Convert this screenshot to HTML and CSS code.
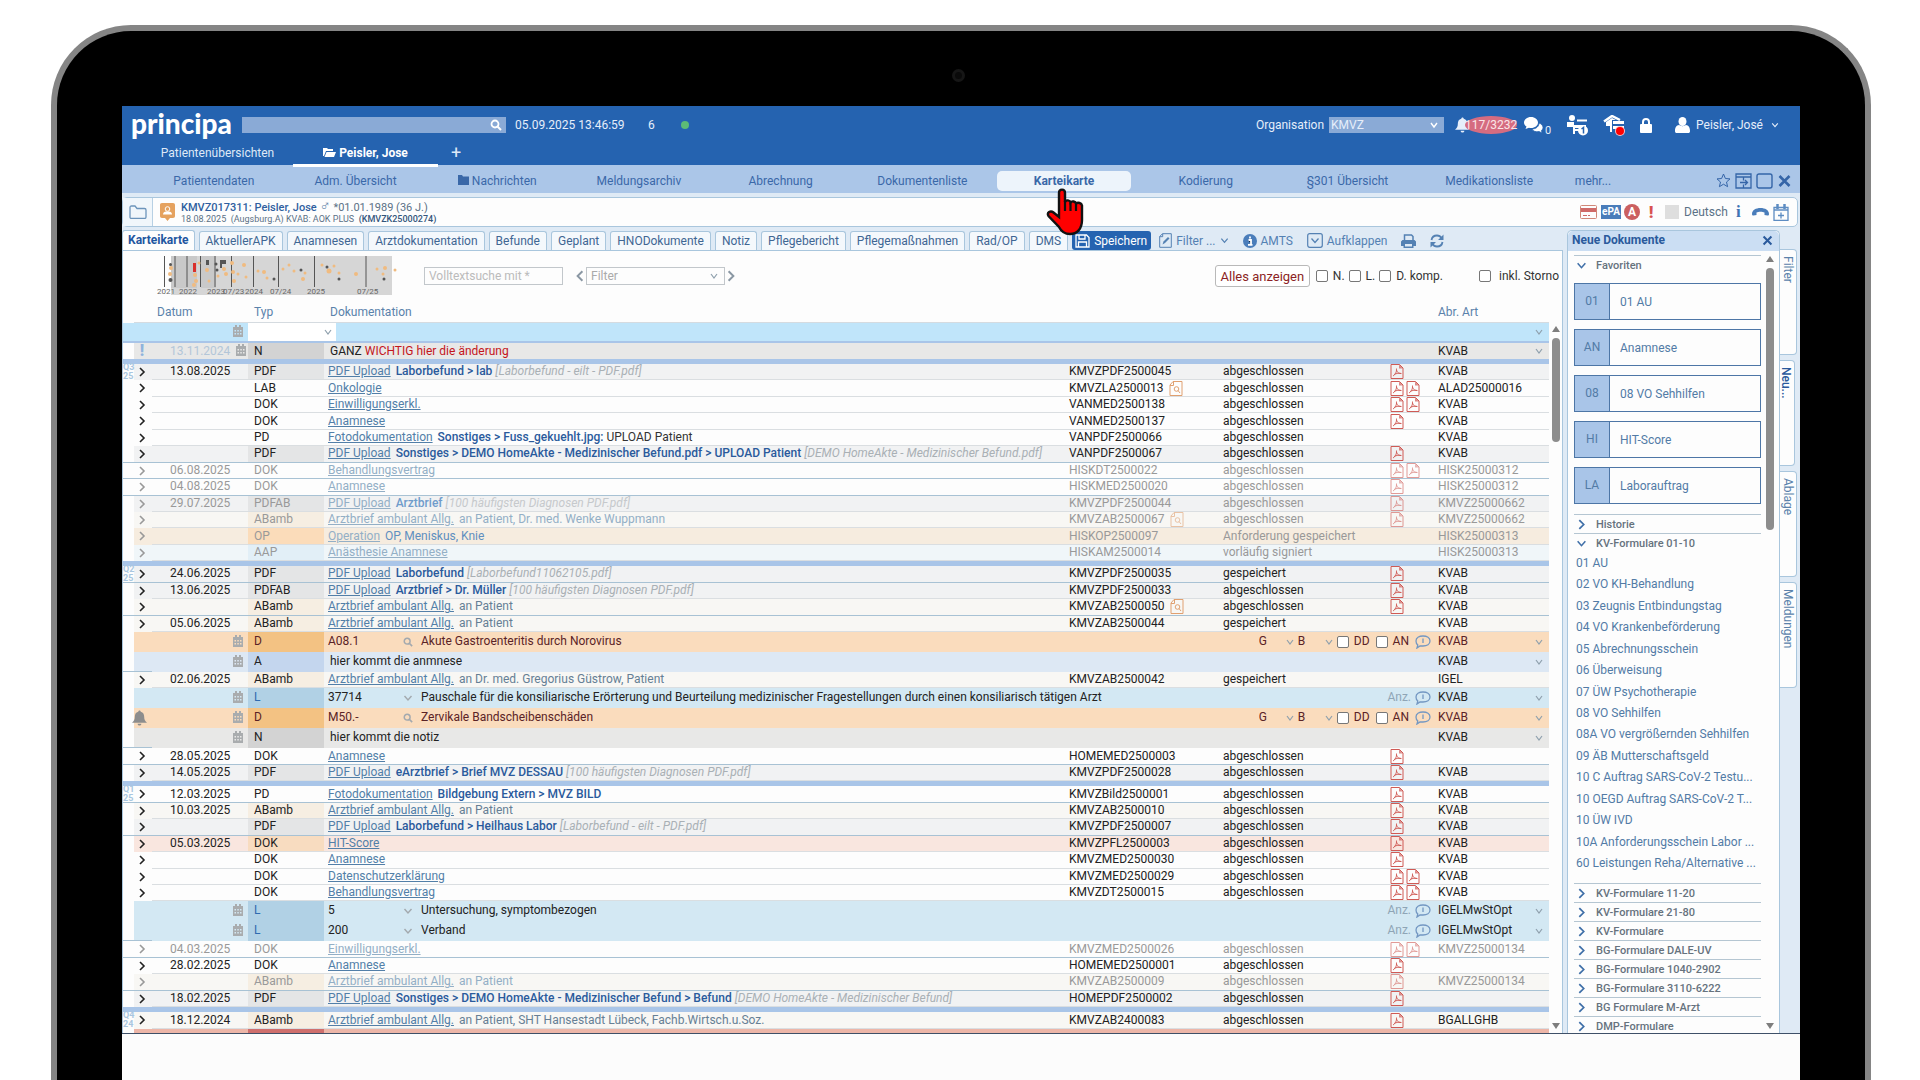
FILE: index.html
```html
<!DOCTYPE html>
<html lang="de">
<head>
  <meta charset="UTF-8">
  <title>principa - Karteikarte</title>
  <meta name="viewport" content="width=device-width, initial-scale=1.0">
  <link rel="stylesheet" href="styles.css">
</head>
<body>

<!-- Icons -->
<svg class="sprite" aria-hidden="true">
  <symbol id="i-search" viewBox="0 0 12 12"><circle cx="5" cy="5" r="3.5" fill="none" stroke="currentColor" stroke-width="1.8"/><path d="M7.5 7.5L11 11" stroke="currentColor" stroke-width="2"/></symbol>
  <symbol id="i-down" viewBox="0 0 10 10"><path d="M1.5 3l3.5 4 3.5-4" fill="none" stroke="currentColor" stroke-width="1.4"/></symbol>
  <symbol id="i-right" viewBox="0 0 10 10"><path d="M3 1l4 4-4 4" fill="none" stroke="currentColor" stroke-width="1.6"/></symbol>
  <symbol id="i-left" viewBox="0 0 10 10"><path d="M7 1L3 5l4 4" fill="none" stroke="currentColor" stroke-width="1.6"/></symbol>
  <symbol id="i-x" viewBox="0 0 14 14"><path d="M2 2l10 10M12 2L2 12" stroke="currentColor" stroke-width="2.6"/></symbol>
  <symbol id="i-cal" viewBox="0 0 12 12"><path fill="currentColor" fill-rule="evenodd" d="M1 2h2V0h2v2h2V0h2v2h2v10H1zM2.500 5v1.500H4V5zm2.800 0v1.500h1.500V5zM8 5v1.500h1.500V5zM2.500 8v1.500H4V8zm2.800 0v1.500h1.500V8zM8 8v1.500h1.500V8z"/></symbol>
  <symbol id="i-pdf" viewBox="0 0 14 15"><path d="M1 .5h8.500L13 4v10.500H1z" fill="none" stroke="currentColor"/><path d="M9 .5V4.500h4z" fill="currentColor" opacity=".7"/><path d="M3 12c2-1 4-4 3.500-7.500M6.500 6c.5 2.500 2.500 3.500 5 3.500M4 10.500c2-1 4-1.500 7-1" fill="none" stroke="currentColor" stroke-width=".9"/></symbol>
  <symbol id="i-preview" viewBox="0 0 14 15"><path d="M4 .5h9v14H1V4z" fill="none" stroke="currentColor"/><path d="M1 4.500h3.500V.5" fill="none" stroke="currentColor"/><circle cx="7.500" cy="8" r="2.300" fill="none" stroke="currentColor"/><path d="M9 9.500l2 2.500" stroke="currentColor"/></symbol>
  <symbol id="i-bubble" viewBox="0 0 16 14"><path d="M8 1c4 0 7 2 7 5s-3 5-7 5l-3 0-3 2 .8-3C1.500 9 1 7.500 1 6c0-3 3-5 7-5zM8 3.500V8" fill="none" stroke="currentColor" stroke-width="1.3"/></symbol>
  <symbol id="i-bell" viewBox="0 0 16 16"><path fill="currentColor" d="M8 0c.8 0 1.300.6 1.300 1.400C12 2 13 4.200 13 7c0 3 1 4.500 3 6H0c2-1.500 3-3 3-6 0-2.800 1-5 3.700-5.600C6.700.6 7.200 0 8 0zM6 14h4c0 1.200-.8 2-2 2s-2-.8-2-2z"/></symbol>
</svg>

<div class="laptop">
  <div class="camera"></div>

  <div class="screen">
    <header class="topbar">
      <div class="logo">principa</div>
      <div class="global-search">
        <input type="text" aria-label="Suche">
        <svg width="12" height="12"><use href="#i-search"/></svg>
      </div>
      <span class="clock">05.09.2025 13:46:59</span>
      <span class="count">6</span>
      <span class="online"></span>
      <div class="topbar-right">
        <label for="org">Organisation</label>
        <select id="org"><option>KMVZ</option></select>
        <svg class="bell" width="15" height="16"><use href="#i-bell"/></svg>
        <span class="badge">117/3232</span>
        <svg class="chat" width="19" height="16" viewBox="0 0 19 16"><path fill="#fff" d="M7 0c4 0 7 2.500 7 5.500S11 11 7 11c-1 0-1.500 0-2-.2L1.500 12l1-2.500C.8 8.500 0 7 0 5.500 0 2.500 3 0 7 0z"/><path fill="#fff" stroke="#2563b0" stroke-width=".8" d="M15 6c2.500.8 4 2.500 4 4.500 0 1.200-.6 2.200-1.500 3L18 16l-3-1.500c-3 .8-6-.2-7-2.500 4 0 7-2.500 7-6z"/></svg>
        <sub class="chat-count">0</sub>
        <svg class="org" width="22" height="21" viewBox="0 0 22 21"><circle cx="5" cy="3" r="3" fill="#fff"/><path fill="#fff" d="M0 7h7v3h12v3H8v6H6v-7H0z"/><path d="M10 5.500h10M8 15h6" stroke="#fff" stroke-width="2"/><circle cx="16" cy="15.500" r="5" fill="#fff"/><path d="M14.500 14l2-1.500v6" fill="none" stroke="#2563b0" stroke-width="1.500"/></svg>
        <svg class="org" width="22" height="21" viewBox="0 0 22 21"><path d="M1 6.500L9 1l8 4" fill="none" stroke="#fff" stroke-width="2.500"/><path fill="#fff" d="M3 7l6-4 4 2H9v12H7v-6H3zM10 6h11v3H10zM10 11h11v3H10z"/><circle cx="17" cy="16" r="5" fill="#f2c4cc"/><circle cx="17" cy="16" r="4" fill="#f00"/></svg>
        <svg class="lock" width="12" height="15" viewBox="0 0 12 15"><path d="M3 7V4a3 3 0 016 0v3" fill="none" stroke="#fff" stroke-width="2"/><rect y="6" width="12" height="9" rx="1" fill="#fff"/></svg>
        <svg class="user" width="15" height="16" viewBox="0 0 15 16"><ellipse cx="7.500" cy="4.500" rx="4" ry="4.500" fill="#fff"/><path fill="#fff" d="M4 8c2 1.500 5 1.500 7 0 2.500.5 4 2 4 6 0 1.500-.5 2-2 2H2c-1.500 0-2-.5-2-2 0-4 1.500-5.500 4-6z"/></svg>
        <span class="username">Peisler, José</span>
        <svg width="8" height="8"><use href="#i-down"/></svg>
      </div>
    </header>

    <nav class="tabs">
      <a href="#">Patientenübersichten</a>
      <a href="#" class="open"><svg width="13" height="10" viewBox="0 0 13 10"><path fill="currentColor" d="M0 1h4l1 1h5v2H3L1 9H0zM3.500 5H13l-2 5H1.500z"/></svg> Peisler, Jose</a>
      <button type="button" class="add">+</button>
    </nav>

    <nav class="subnav">
      <a href="#">Patientendaten</a>
      <a href="#">Adm. Übersicht</a>
      <a href="#"><svg width="11" height="10" viewBox="0 0 11 10"><path fill="currentColor" d="M0 0h4l1 1.500h6V10H0z"/></svg> Nachrichten</a>
      <a href="#">Meldungsarchiv</a>
      <a href="#">Abrechnung</a>
      <a href="#">Dokumentenliste</a>
      <a href="#" class="active">Karteikarte</a>
      <a href="#">Kodierung</a>
      <a href="#">§301 Übersicht</a>
      <a href="#">Medikationsliste</a>
      <a href="#" class="more">mehr...</a>
      <div class="win-icons">
        <svg width="15" height="15" viewBox="0 0 15 15"><path d="M7.500 1l1.900 4.500 4.600.4-3.500 3.100 1.100 4.700-4.100-2.500-4.100 2.500L4.500 9 1 5.900l4.600-.4z" fill="none" stroke="currentColor"/></svg>
        <svg width="17" height="16" viewBox="0 0 17 16"><path d="M1 1h15v14H1zM1 4h15M5 9.500h7M10 7l2.500 2.500L10 12M8.500 4v3.500M8.500 11.500V15" fill="none" stroke="currentColor" stroke-width="1.300"/></svg>
        <svg width="17" height="16" viewBox="0 0 17 16"><rect x="1" y="1" width="15" height="14" rx="2" fill="none" stroke="currentColor" stroke-width="1.400"/></svg>
        <svg width="15" height="14"><use href="#i-x"/></svg>
      </div>
    </nav>

    <div class="workspace">
      <section class="patient">
        <div class="folder"><svg width="18" height="14" viewBox="0 0 18 14"><path d="M1 12V2.500C1 1.500 1.500 1 2.500 1H6l2 2.500h7.500c1 0 1.500.5 1.500 1.500v7c0 1-.5 1.500-1.500 1.500h-13C1.500 13.500 1 13 1 12z" fill="none" stroke="currentColor" stroke-width="1.300"/></svg></div>
        <svg class="avatar" width="15" height="18" viewBox="0 0 15 18"><path fill="#e5a25f" d="M2 0h11c1.300 0 2 .7 2 2v11c0 1.300-.7 2-2 2h-3l-2.500 3L5 15H2c-1.300 0-2-.7-2-2V2C0 .7.7 0 2 0z"/><circle cx="7.500" cy="6" r="2.300" fill="none" stroke="#fff"/><path d="M3 11.500c0-2 1.500-3 3-3h3c1.500 0 3 1 3 3z" fill="#fff"/></svg>
        <div class="who">
          <div><b>KMVZ017311: Peisler, Jose</b> <span class="sex">♂</span> *01.01.1989 (36 J.)</div>
          <div class="case">18.08.2025 &nbsp;(Augsburg.A) KVAB: AOK PLUS <b>&nbsp;(KMVZK25000274)</b></div>
        </div>
        <div class="flags">
          <svg width="17" height="14" viewBox="0 0 17 14"><rect x=".5" y=".5" width="16" height="13" rx="1" fill="none" stroke="#d08878"/><path fill="#cf6a68" d="M1 3h15v4H1z"/><path d="M3 10.500h4M8 10.500h2" stroke="#cf6a68"/></svg>
          <span class="epa">ePA</span>
          <span class="allergy">A</span>
          <span class="alert">!</span>
          <span class="lang-flag"></span>
          <span class="lang">Deutsch</span>
          <span class="info">i</span>
          <svg width="17" height="8" viewBox="0 0 17 8"><path fill="#4a7dba" d="M0 6c0-4 4-6 8.500-6S17 2 17 6c0 1-.5 1.500-1.500 1.500L12.500 7V4.500c-2-1-6-1-8 0V7l-3 .5C.5 7.500 0 7 0 6z"/></svg>
          <svg width="16" height="17" viewBox="0 0 16 17"><path d="M1 3.500h14v13H1zM1 6h14M8 8.500v6M5 11.500h6" fill="none" stroke="#5d8cc2" stroke-width="1.300"/><path d="M4.500 0v5M11.500 0v5" stroke="#5d8cc2" stroke-width="2.500"/></svg>
        </div>
      </section>

      <div class="columns">
        <main class="chart">
          <nav class="chart-tabs">
            <a href="#" class="active">Karteikarte</a>
            <a href="#">AktuellerAPK</a>
            <a href="#">Anamnesen</a>
            <a href="#">Arztdokumentation</a>
            <a href="#">Befunde</a>
            <a href="#">Geplant</a>
            <a href="#">HNODokumente</a>
            <a href="#">Notiz</a>
            <a href="#">Pflegebericht</a>
            <a href="#">Pflegemaßnahmen</a>
            <a href="#">Rad/OP</a>
            <a href="#">DMS</a>
            <button type="button" class="save"><svg width="15" height="14" viewBox="0 0 15 14"><path d="M1 1h10.500L14 3.500V13H1zM3.500 13V8h8v5M4 1v4h6V1" fill="none" stroke="currentColor" stroke-width="1.300"/></svg>Speichern</button>
            <button type="button" class="tool"><svg width="13" height="15" viewBox="0 0 13 15"><path d="M3.500.7h8.800v13.600H.7V3.500zM.7 3.700h3v-3" fill="none" stroke="currentColor"/><path d="M3.500 11.500l1-3L9 4l1.500 1.500L6 10z" fill="currentColor"/></svg>Filter ... <svg width="9" height="9"><use href="#i-down"/></svg></button>
            <button type="button" class="tool"><svg width="14" height="14" viewBox="0 0 14 14"><circle cx="7" cy="7" r="7" fill="#4a7dba"/><path d="M5.500 6H8v4.500M5 10.800h4.500M7 2.500v2" stroke="#fff" stroke-width="1.800"/></svg>AMTS</button>
            <button type="button" class="tool"><svg width="16" height="15" viewBox="0 0 16 15"><rect x=".7" y=".7" width="14.600" height="13.600" rx="2" fill="none" stroke="currentColor" stroke-width="1.200"/><path d="M4.500 5.500L8 9.500l3.500-4" fill="none" stroke="currentColor" stroke-width="1.300"/></svg>Aufklappen</button>
            <button type="button" class="tool" aria-label="Drucken"><svg width="15" height="14" viewBox="0 0 15 14"><path d="M3.500 6V1h7L12 2.500V6" fill="none" stroke="currentColor" stroke-width="1.500"/><path fill="currentColor" fill-rule="evenodd" d="M1.500 6h12L15 7.500V12h-2.500v2h-10v-2H0V7.500zM4 10v2.500h7V10z"/></svg></button>
            <button type="button" class="tool" aria-label="Aktualisieren"><svg width="14" height="14" viewBox="0 0 14 14"><path d="M1.500 6C2 3 4.500 1.500 7 1.500c2 0 3.500.8 4.500 2.500M12.500 8c-.5 3-3 4.500-5.500 4.500-2 0-3.500-.8-4.500-2.500" fill="none" stroke="currentColor" stroke-width="1.800"/><path fill="currentColor" d="M13.500.5V6H8zM.5 13.500V8H6z"/></svg></button>
          </nav>

          <div class="sheet">
            <div class="filters">
              <svg class="timeline" width="250" height="44" viewBox="0 0 250 44">
                <rect x="21" y="2" width="221" height="39" fill="#d6d6d6"/>
                <path fill="#c9c9c9" d="M21 2h26v32H21zM51 2h15v32H51z"/>
                <path d="M14.500 2v31M25 2v31M37 2v31M50.500 2v31M65 2v31M81.500 2v31M103.500 2v31M128.500 2v31M164.500 2v31M216 2v31" stroke="#555"/>
                <g fill="#f0bb80"><circle cx="21" cy="14" r="2"/><circle cx="20" cy="20" r="2"/><circle cx="45" cy="21" r="2"/><circle cx="46" cy="27" r="2"/><circle cx="49" cy="9" r="1.500"/><circle cx="44" cy="31" r="2"/><circle cx="57" cy="16" r="2"/><circle cx="59" cy="27" r="1.500"/><circle cx="68" cy="22" r="1.500"/><circle cx="74" cy="15" r="2"/><circle cx="76" cy="20" r="2"/><circle cx="82" cy="9" r="2"/><circle cx="83" cy="18" r="2"/><circle cx="84" cy="27" r="2"/><circle cx="88" cy="20" r="1.500"/><circle cx="94" cy="11" r="2"/><circle cx="96" cy="23" r="1.500"/><circle cx="108" cy="17" r="1.500"/><circle cx="114" cy="18" r="2"/><circle cx="117" cy="24" r="1.500"/><circle cx="133" cy="15" r="1.500"/><circle cx="139" cy="11" r="1.500"/><circle cx="144" cy="17" r="1.500"/><circle cx="153" cy="25" r="2"/><circle cx="155" cy="19" r="1.500"/><circle cx="172" cy="11" r="1.500"/><circle cx="179" cy="17" r="2.500"/><circle cx="184" cy="12" r="1.500"/><circle cx="189" cy="19" r="1.500"/><circle cx="206" cy="20" r="2"/><circle cx="227" cy="15" r="1.500"/><circle cx="233" cy="20" r="1.500"/><circle cx="235" cy="14" r="2"/><circle cx="245" cy="16" r="1.500"/></g>
                <g fill="#555"><circle cx="20.500" cy="10.500" r="1.500"/><circle cx="20.500" cy="26" r="2"/><circle cx="66" cy="10" r="1.500"/><circle cx="67" cy="16" r="1.500"/><path d="M56 6h3v5h-3zM70 6h6v4h-4v4h-2z"/><circle cx="124" cy="25" r="1.500"/><circle cx="151" cy="16" r="1.500"/><circle cx="177" cy="13" r="1.500"/><circle cx="189" cy="25" r="1.500"/><circle cx="234" cy="25" r="1.500"/></g>
                <path fill="#d9302c" d="M43 9h3v9h-3z"/>
                <g class="years"><text x="7" y="40">2021</text><text x="29" y="40">2022</text><text x="57" y="40">2023</text><text x="73" y="40">07/23</text><text x="95" y="40">2024</text><text x="120" y="40">07/24</text><text x="157" y="40">2025</text><text x="207" y="40">07/25</text></g>
              </svg>
              <input type="text" class="fulltext" placeholder="Volltextsuche mit *" aria-label="Volltextsuche">
              <svg class="prev" width="12" height="12"><use href="#i-left"/></svg>
              <select class="filter" aria-label="Filter"><option>Filter</option></select>
              <svg width="12" height="12"><use href="#i-right"/></svg>
              <div class="switches">
                <button type="button" class="show-all">Alles anzeigen</button>
                <label><input type="checkbox">N.</label>
                <label><input type="checkbox">L.</label>
                <label><input type="checkbox">D. komp.</label>
                <label class="storno"><input type="checkbox">inkl. Storno</label>
              </div>
            </div>

            <div class="list">
              <table>
                <colgroup><col class="c-q"><col class="c-chev"><col class="c-date"><col class="c-type"><col><col class="c-nr"><col class="c-status"><col class="c-files"><col class="c-abr"></colgroup>
                <thead>
                  <tr><th></th><th class="l"></th><th class="l d">Datum</th><th class="l t">Typ</th><th class="l doc">Dokumentation</th><th class="l"></th><th class="l"></th><th class="l"></th><th class="l">Abr. Art</th></tr>
                </thead>
                <tbody>
                  <tr class="new"><td></td><td></td><td class="cal"><svg><use href="#i-cal"/></svg></td><td colspan="2"><select class="type" aria-label="Typ"><option></option></select></td><td></td><td></td><td></td><td><select class="abr" aria-label="Abr. Art"><option></option></select></td></tr>
                  <tr class="edit pin note"><td></td><td class="mark">!</td><td class="cal"><span>13.11.2024</span><svg><use href="#i-cal"/></svg></td><td>N</td><td colspan="4" class="free">GANZ <em>WICHTIG hier die änderung</em></td><td><select class="abr" aria-label="Abr. Art"><option>KVAB</option></select></td></tr>
                  <tr class="bar"><td colspan="9"></td></tr>

                  <tr class="pdf"><td class="q"><span>Q3<br>25</span></td><td><svg><use href="#i-right"/></svg></td><td>13.08.2025</td><td>PDF</td><td><a href="#">PDF Upload</a> <b>Laborbefund &gt; lab</b> <i>[Laborbefund - eilt - PDF.pdf]</i></td><td>KMVZPDF2500045</td><td>abgeschlossen</td><td class="f"><svg><use href="#i-pdf"/></svg></td><td>KVAB</td></tr>
                  <tr><td></td><td><svg><use href="#i-right"/></svg></td><td></td><td>LAB</td><td><a href="#">Onkologie</a></td><td>KMVZLA2500013 <svg class="pv"><use href="#i-preview"/></svg></td><td>abgeschlossen</td><td class="f"><svg><use href="#i-pdf"/></svg><svg><use href="#i-pdf"/></svg></td><td>ALAD25000016</td></tr>
                  <tr><td></td><td><svg><use href="#i-right"/></svg></td><td></td><td>DOK</td><td><a href="#">Einwilligungserkl.</a></td><td>VANMED2500138</td><td>abgeschlossen</td><td class="f"><svg><use href="#i-pdf"/></svg><svg><use href="#i-pdf"/></svg></td><td>KVAB</td></tr>
                  <tr><td></td><td><svg><use href="#i-right"/></svg></td><td></td><td>DOK</td><td><a href="#">Anamnese</a></td><td>VANMED2500137</td><td>abgeschlossen</td><td class="f"><svg><use href="#i-pdf"/></svg></td><td>KVAB</td></tr>
                  <tr><td></td><td><svg><use href="#i-right"/></svg></td><td></td><td>PD</td><td><a href="#">Fotodokumentation</a> <b>Sonstiges &gt; Fuss_gekuehlt.jpg:</b> <span class="dark">UPLOAD Patient</span></td><td>VANPDF2500066</td><td>abgeschlossen</td><td></td><td>KVAB</td></tr>
                  <tr class="pdf last"><td></td><td><svg><use href="#i-right"/></svg></td><td></td><td>PDF</td><td><a href="#">PDF Upload</a> <b>Sonstiges &gt; DEMO HomeAkte - Medizinischer Befund.pdf &gt; UPLOAD Patient</b> <i>[DEMO HomeAkte - Medizinischer Befund.pdf]</i></td><td>VANPDF2500067</td><td>abgeschlossen</td><td class="f"><svg><use href="#i-pdf"/></svg></td><td>KVAB</td></tr>
                  <tr class="dim last"><td></td><td><svg><use href="#i-right"/></svg></td><td>06.08.2025</td><td>DOK</td><td><a href="#">Behandlungsvertrag</a></td><td>HISKDT2500022</td><td>abgeschlossen</td><td class="f"><svg><use href="#i-pdf"/></svg><svg><use href="#i-pdf"/></svg></td><td>HISK25000312</td></tr>
                  <tr class="dim last"><td></td><td><svg><use href="#i-right"/></svg></td><td>04.08.2025</td><td>DOK</td><td><a href="#">Anamnese</a></td><td>HISKMED2500020</td><td>abgeschlossen</td><td class="f"><svg><use href="#i-pdf"/></svg></td><td>HISK25000312</td></tr>
                  <tr class="dim pdf"><td></td><td><svg><use href="#i-right"/></svg></td><td>29.07.2025</td><td>PDFAB</td><td><a href="#">PDF Upload</a> <b>Arztbrief</b> <i>[100 häufigsten Diagnosen PDF.pdf]</i></td><td>KMVZPDF2500044</td><td>abgeschlossen</td><td class="f"><svg><use href="#i-pdf"/></svg></td><td>KMVZ25000662</td></tr>
                  <tr class="dim ab"><td></td><td><svg><use href="#i-right"/></svg></td><td></td><td>ABamb</td><td><a href="#">Arztbrief ambulant Allg.</a> an Patient, Dr. med. Wenke Wuppmann</td><td>KMVZAB2500067 <svg class="pv"><use href="#i-preview"/></svg></td><td>abgeschlossen</td><td class="f"><svg><use href="#i-pdf"/></svg></td><td>KMVZ25000662</td></tr>
                  <tr class="dim op"><td></td><td><svg><use href="#i-right"/></svg></td><td></td><td>OP</td><td><a href="#">Operation</a> <span class="blue">OP, Meniskus, Knie</span></td><td>HISKOP2500097</td><td>Anforderung gespeichert</td><td></td><td>HISK25000313</td></tr>
                  <tr class="dim aap"><td></td><td><svg><use href="#i-right"/></svg></td><td></td><td>AAP</td><td><a href="#">Anästhesie Anamnese</a></td><td>HISKAM2500014</td><td>vorläufig signiert</td><td></td><td>HISK25000313</td></tr>
                  <tr class="bar"><td colspan="9"></td></tr>

                  <tr class="pdf last"><td class="q"><span>Q2<br>25</span></td><td><svg><use href="#i-right"/></svg></td><td>24.06.2025</td><td>PDF</td><td><a href="#">PDF Upload</a> <b>Laborbefund</b> <i>[Laborbefund11062105.pdf]</i></td><td>KMVZPDF2500035</td><td>gespeichert</td><td class="f"><svg><use href="#i-pdf"/></svg></td><td>KVAB</td></tr>
                  <tr class="pdf"><td></td><td><svg><use href="#i-right"/></svg></td><td>13.06.2025</td><td>PDFAB</td><td><a href="#">PDF Upload</a> <b>Arztbrief &gt; Dr. Müller</b> <i>[100 häufigsten Diagnosen PDF.pdf]</i></td><td>KMVZPDF2500033</td><td>abgeschlossen</td><td class="f"><svg><use href="#i-pdf"/></svg></td><td>KVAB</td></tr>
                  <tr class="ab last"><td></td><td><svg><use href="#i-right"/></svg></td><td></td><td>ABamb</td><td><a href="#">Arztbrief ambulant Allg.</a> an Patient</td><td>KMVZAB2500050 <svg class="pv"><use href="#i-preview"/></svg></td><td>abgeschlossen</td><td class="f"><svg><use href="#i-pdf"/></svg></td><td>KVAB</td></tr>
                  <tr class="ab"><td></td><td><svg><use href="#i-right"/></svg></td><td>05.06.2025</td><td>ABamb</td><td><a href="#">Arztbrief ambulant Allg.</a> an Patient</td><td>KMVZAB2500044</td><td>gespeichert</td><td></td><td>KVAB</td></tr>
                  <tr class="edit diag"><td></td><td></td><td class="cal"><svg><use href="#i-cal"/></svg></td><td>D</td><td colspan="4"><div class="entry"><span class="code">A08.1</span><svg><use href="#i-search"/></svg><span class="desc">Akute Gastroenteritis durch Norovirus</span><select class="mini" aria-label="Sicherheit"><option>G</option></select><select class="mini" aria-label="Seite"><option>B</option></select><label><input type="checkbox">DD</label><label><input type="checkbox">AN</label><svg class="bub"><use href="#i-bubble"/></svg></div></td><td><select class="abr" aria-label="Abr. Art"><option>KVAB</option></select></td></tr>
                  <tr class="edit anam last"><td></td><td></td><td class="cal"><svg><use href="#i-cal"/></svg></td><td>A</td><td colspan="4" class="free">hier kommt die anmnese</td><td><select class="abr" aria-label="Abr. Art"><option>KVAB</option></select></td></tr>
                  <tr class="ab"><td></td><td><svg><use href="#i-right"/></svg></td><td>02.06.2025</td><td>ABamb</td><td><a href="#">Arztbrief ambulant Allg.</a> an Dr. med. Gregorius Güstrow, Patient</td><td>KMVZAB2500042</td><td>gespeichert</td><td></td><td>IGEL</td></tr>
                  <tr class="edit perf"><td></td><td></td><td class="cal"><svg><use href="#i-cal"/></svg></td><td>L</td><td colspan="4"><div class="entry"><span class="code">37714</span><svg><use href="#i-down"/></svg><span class="desc">Pauschale für die konsiliarische Erörterung und Beurteilung medizinischer Fragestellungen durch einen konsiliarisch tätigen Arzt</span><span class="anz">Anz.</span><svg class="bub"><use href="#i-bubble"/></svg></div></td><td><select class="abr" aria-label="Abr. Art"><option>KVAB</option></select></td></tr>
                  <tr class="edit diag"><td></td><td class="remind"><svg><use href="#i-bell"/></svg></td><td class="cal"><svg><use href="#i-cal"/></svg></td><td>D</td><td colspan="4"><div class="entry"><span class="code">M50.-</span><svg><use href="#i-search"/></svg><span class="desc">Zervikale Bandscheibenschäden</span><select class="mini" aria-label="Sicherheit"><option>G</option></select><select class="mini" aria-label="Seite"><option>B</option></select><label><input type="checkbox">DD</label><label><input type="checkbox">AN</label><svg class="bub"><use href="#i-bubble"/></svg></div></td><td><select class="abr" aria-label="Abr. Art"><option>KVAB</option></select></td></tr>
                  <tr class="edit note last"><td></td><td></td><td class="cal"><svg><use href="#i-cal"/></svg></td><td>N</td><td colspan="4" class="free">hier kommt die notiz</td><td><select class="abr" aria-label="Abr. Art"><option>KVAB</option></select></td></tr>
                  <tr class="last"><td></td><td><svg><use href="#i-right"/></svg></td><td>28.05.2025</td><td>DOK</td><td><a href="#">Anamnese</a></td><td>HOMEMED2500003</td><td>abgeschlossen</td><td class="f"><svg><use href="#i-pdf"/></svg></td><td></td></tr>
                  <tr class="pdf"><td></td><td><svg><use href="#i-right"/></svg></td><td>14.05.2025</td><td>PDF</td><td><a href="#">PDF Upload</a> <b>eArztbrief &gt; Brief MVZ DESSAU</b> <i>[100 häufigsten Diagnosen PDF.pdf]</i></td><td>KMVZPDF2500028</td><td>abgeschlossen</td><td class="f"><svg><use href="#i-pdf"/></svg></td><td>KVAB</td></tr>
                  <tr class="bar"><td colspan="9"></td></tr>

                  <tr class="last"><td class="q"><span>Q1<br>25</span></td><td><svg><use href="#i-right"/></svg></td><td>12.03.2025</td><td>PD</td><td><a href="#">Fotodokumentation</a> <b>Bildgebung Extern &gt; MVZ BILD</b></td><td>KMVZBild2500001</td><td>abgeschlossen</td><td class="f"><svg><use href="#i-pdf"/></svg></td><td>KVAB</td></tr>
                  <tr class="ab"><td></td><td><svg><use href="#i-right"/></svg></td><td>10.03.2025</td><td>ABamb</td><td><a href="#">Arztbrief ambulant Allg.</a> an Patient</td><td>KMVZAB2500010</td><td>abgeschlossen</td><td class="f"><svg><use href="#i-pdf"/></svg></td><td>KVAB</td></tr>
                  <tr class="pdf last"><td></td><td><svg><use href="#i-right"/></svg></td><td></td><td>PDF</td><td><a href="#">PDF Upload</a> <b>Laborbefund &gt; Heilhaus Labor</b> <i>[Laborbefund - eilt - PDF.pdf]</i></td><td>KMVZPDF2500007</td><td>abgeschlossen</td><td class="f"><svg><use href="#i-pdf"/></svg></td><td>KVAB</td></tr>
                  <tr class="score"><td></td><td><svg><use href="#i-right"/></svg></td><td>05.03.2025</td><td>DOK</td><td><a href="#">HIT-Score</a></td><td>KMVZPFL2500003</td><td>abgeschlossen</td><td class="f"><svg><use href="#i-pdf"/></svg></td><td>KVAB</td></tr>
                  <tr><td></td><td><svg><use href="#i-right"/></svg></td><td></td><td>DOK</td><td><a href="#">Anamnese</a></td><td>KMVZMED2500030</td><td>abgeschlossen</td><td class="f"><svg><use href="#i-pdf"/></svg></td><td>KVAB</td></tr>
                  <tr><td></td><td><svg><use href="#i-right"/></svg></td><td></td><td>DOK</td><td><a href="#">Datenschutzerklärung</a></td><td>KMVZMED2500029</td><td>abgeschlossen</td><td class="f"><svg><use href="#i-pdf"/></svg><svg><use href="#i-pdf"/></svg></td><td>KVAB</td></tr>
                  <tr><td></td><td><svg><use href="#i-right"/></svg></td><td></td><td>DOK</td><td><a href="#">Behandlungsvertrag</a></td><td>KMVZDT2500015</td><td>abgeschlossen</td><td class="f"><svg><use href="#i-pdf"/></svg><svg><use href="#i-pdf"/></svg></td><td>KVAB</td></tr>
                  <tr class="edit perf"><td></td><td></td><td class="cal"><svg><use href="#i-cal"/></svg></td><td>L</td><td colspan="4"><div class="entry"><span class="code">5</span><svg><use href="#i-down"/></svg><span class="desc">Untersuchung, symptombezogen</span><span class="anz">Anz.</span><svg class="bub"><use href="#i-bubble"/></svg></div></td><td><select class="abr" aria-label="Abr. Art"><option>IGELMwStOpt</option></select></td></tr>
                  <tr class="edit perf last"><td></td><td></td><td class="cal"><svg><use href="#i-cal"/></svg></td><td>L</td><td colspan="4"><div class="entry"><span class="code">200</span><svg><use href="#i-down"/></svg><span class="desc">Verband</span><span class="anz">Anz.</span><svg class="bub"><use href="#i-bubble"/></svg></div></td><td><select class="abr" aria-label="Abr. Art"><option>IGELMwStOpt</option></select></td></tr>
                  <tr class="dim last"><td></td><td><svg><use href="#i-right"/></svg></td><td>04.03.2025</td><td>DOK</td><td><a href="#">Einwilligungserkl.</a></td><td>KMVZMED2500026</td><td>abgeschlossen</td><td class="f"><svg><use href="#i-pdf"/></svg><svg><use href="#i-pdf"/></svg></td><td>KMVZ25000134</td></tr>
                  <tr><td></td><td><svg><use href="#i-right"/></svg></td><td>28.02.2025</td><td>DOK</td><td><a href="#">Anamnese</a></td><td>HOMEMED2500001</td><td>abgeschlossen</td><td class="f"><svg><use href="#i-pdf"/></svg></td><td></td></tr>
                  <tr class="dim ab last"><td></td><td><svg><use href="#i-right"/></svg></td><td></td><td>ABamb</td><td><a href="#">Arztbrief ambulant Allg.</a> an Patient</td><td>KMVZAB2500009</td><td>abgeschlossen</td><td class="f"><svg><use href="#i-pdf"/></svg></td><td>KMVZ25000134</td></tr>
                  <tr class="pdf"><td></td><td><svg><use href="#i-right"/></svg></td><td>18.02.2025</td><td>PDF</td><td><a href="#">PDF Upload</a> <b>Sonstiges &gt; DEMO HomeAkte - Medizinischer Befund &gt; Befund</b> <i>[DEMO HomeAkte - Medizinischer Befund]</i></td><td>HOMEPDF2500002</td><td>abgeschlossen</td><td class="f"><svg><use href="#i-pdf"/></svg></td><td></td></tr>
                  <tr class="bar"><td colspan="9"></td></tr>

                  <tr class="ab"><td class="q"><span>Q4<br>24</span></td><td><svg><use href="#i-right"/></svg></td><td>18.12.2024</td><td>ABamb</td><td><a href="#">Arztbrief ambulant Allg.</a> an Patient, SHT Hansestadt Lübeck, Fachb.Wirtsch.u.Soz.</td><td>KMVZAB2400083</td><td>abgeschlossen</td><td class="f"><svg><use href="#i-pdf"/></svg></td><td>BGALLGHB</td></tr>
                  <tr class="cut"><td></td><td></td><td></td><td></td><td></td><td></td><td></td><td></td><td></td></tr>
                </tbody>
              </table>
              <div class="scroll list-scroll"><span class="up"></span><span class="thumb"></span><span class="down"></span></div>
            </div>
          </div>
        </main>

        <aside class="panel">
          <h2>Neue Dokumente <button type="button" aria-label="Schließen"><svg width="11" height="11" viewBox="0 0 14 14"><use href="#i-x"/></svg></button></h2>
          <div class="panel-body">
            <div class="groups">
              <h3><svg><use href="#i-down"/></svg>Favoriten</h3>
              <div class="cards">
                <a href="#"><span>01</span>01 AU</a>
                <a href="#"><span>AN</span>Anamnese</a>
                <a href="#"><span>08</span>08 VO Sehhilfen</a>
                <a href="#"><span>HI</span>HIT-Score</a>
                <a href="#"><span>LA</span>Laborauftrag</a>
              </div>
              <h3><svg><use href="#i-right"/></svg>Historie</h3>
              <h3><svg><use href="#i-down"/></svg>KV-Formulare 01-10</h3>
              <ul>
                <li><a href="#">01 AU</a></li>
                <li><a href="#">02 VO KH-Behandlung</a></li>
                <li><a href="#">03 Zeugnis Entbindungstag</a></li>
                <li><a href="#">04 VO Krankenbeförderung</a></li>
                <li><a href="#">05 Abrechnungsschein</a></li>
                <li><a href="#">06 Überweisung</a></li>
                <li><a href="#">07 ÜW Psychotherapie</a></li>
                <li><a href="#">08 VO Sehhilfen</a></li>
                <li><a href="#">08A VO vergrößernden Sehhilfen</a></li>
                <li><a href="#">09 ÄB Mutterschaftsgeld</a></li>
                <li><a href="#">10 C Auftrag SARS-CoV-2 Testu...</a></li>
                <li><a href="#">10 OEGD Auftrag SARS-CoV-2 T...</a></li>
                <li><a href="#">10 ÜW IVD</a></li>
                <li><a href="#">10A Anforderungsschein Labor ...</a></li>
                <li><a href="#">60 Leistungen Reha/Alternative ...</a></li>
              </ul>
              <h3><svg><use href="#i-right"/></svg>KV-Formulare 11-20</h3>
              <h3><svg><use href="#i-right"/></svg>KV-Formulare 21-80</h3>
              <h3><svg><use href="#i-right"/></svg>KV-Formulare</h3>
              <h3><svg><use href="#i-right"/></svg>BG-Formulare DALE-UV</h3>
              <h3><svg><use href="#i-right"/></svg>BG-Formulare 1040-2902</h3>
              <h3><svg><use href="#i-right"/></svg>BG-Formulare 3110-6222</h3>
              <h3><svg><use href="#i-right"/></svg>BG Formulare M-Arzt</h3>
              <h3><svg><use href="#i-right"/></svg>DMP-Formulare</h3>
            </div>
            <div class="scroll panel-scroll"><span class="up"></span><span class="thumb"></span><span class="down"></span></div>
          </div>
        </aside>

        <nav class="rail">
          <a href="#">Filter</a>
          <a href="#" class="active">Neu...</a>
          <a href="#">Ablage</a>
          <a href="#">Meldungen</a>
        </nav>
      </div>
    </div>

    <svg class="pointer" width="38" height="48" viewBox="0 0 38 48"><path d="M13 5c0-4.500 6-4.500 6 0v9c1-2.500 5-2 5.500.5 1.500-2 5-1 5.500 1 2-1.500 5.500-.5 6 2V32c0 9-5 14-12 14-6 0-9-3-11-7L2.500 28c-2-3.500 2-6 5-3.500L13 29z" fill="#f00" stroke="#111" stroke-width="2.400"/><path d="M19 13v10M24.500 15v8M30 16v7" stroke="#111" stroke-width="2.200"/></svg>
  </div>
</div>

</body>
</html>
```
FILE: styles.css
```css
* { margin: 0; padding: 0; box-sizing: border-box; }
html, body { height: 100%; }
body {
  background: #fff;
  font-family: Roboto, "Liberation Sans", sans-serif;
  font-size: 12px;
  color: #222;
  overflow: hidden;
}
a { color: inherit; text-decoration: none; }
button, input, select { font: inherit; color: inherit; border: 0; background: none; border-radius: 0; }
b { font-weight: 500; }
svg { flex: none; }
.sprite { position: absolute; width: 0; height: 0; }

select {
  appearance: none;
  background: url("data:image/svg+xml,%3Csvg xmlns='http://www.w3.org/2000/svg' width='8' height='8'%3E%3Cpath d='M1 2l3 4 3-4' fill='none' stroke='%238fa0ad' stroke-width='1.2'/%3E%3C/svg%3E") no-repeat right 6px center;
}

input[type=checkbox] {
  appearance: none;
  width: 12px;
  height: 12px;
  border: 1px solid #777;
  border-radius: 2px;
  background: #fff;
}

/* Laptop */
.laptop {
  position: relative;
  height: calc(100vh - 25px);
  margin: 25px 49px 0 51px;
  padding: 75px 65px 0;
  border: 6px solid #858585;
  border-bottom: 0;
  border-radius: 80px 80px 0 0;
  background: #000;
}
.camera {
  position: absolute;
  top: 38px;
  left: calc(50% - 9px);
  width: 13px;
  height: 13px;
  border: 3px solid #161616;
  border-radius: 50%;
  background: #0a0a0a;
}
.screen {
  position: relative;
  display: flex;
  flex-direction: column;
  height: 100%;
  padding-bottom: 46px;
  background: #fcfcfc;
}

/* Header */
.topbar {
  display: flex;
  align-items: center;
  height: 34px;
  padding: 4px 21px 0 9px;
  background: #2563b0;
  color: #e6eefa;
}
.logo { width: 111px; padding-bottom: 5px; font: 900 28px/26px Lato, sans-serif; color: #fff; }
.global-search {
  display: flex;
  align-items: center;
  width: 264px;
  height: 16px;
  padding-right: 4px;
  background: #8aaad6;
  color: #fff;
}
.global-search input { flex: 1; min-width: 0; }
.clock { margin-left: 9px; width: 133px; }
.count { width: 33px; }
.online { width: 8px; height: 8px; border-radius: 50%; background: #5cbb76; }
.topbar-right { display: flex; align-items: center; margin-left: auto; }
.topbar-right select {
  width: 115px;
  height: 16px;
  margin: 0 11px 0 5px;
  padding-left: 2px;
  background-color: #8aaad6;
  background-image: url("data:image/svg+xml,%3Csvg xmlns='http://www.w3.org/2000/svg' width='8' height='8'%3E%3Cpath d='M1 2l3 4 3-4' fill='none' stroke='%23fff' stroke-width='1.4'/%3E%3C/svg%3E");
}
.badge {
  margin-left: -5px;
  width: 52px;
  height: 18px;
  border-radius: 50%;
  background: #d56c80;
  color: #fbe6e8;
  line-height: 18px;
  text-align: center;
}
.chat { margin-left: 7px; }
.chat-count { width: 9px; margin: 12px 13px 0 2px; font-size: 11px; line-height: 12px; }
.org { margin-right: 14px; }
.lock { margin: 0 23px 0 1px; }
.username { margin: 0 8px 0 6px; }

.tabs { display: flex; height: 25px; padding-left: 10px; background: #2563b0; color: #dfe9f7; }
.tabs a { width: 145px; height: 27px; margin-left: 13px; text-align: center; line-height: 26px; }
.tabs a.open { z-index: 1; border-bottom: 3px solid #fff; color: #fff; font-weight: 700; }
.tabs a:first-child + a { margin-left: 3px; }
.add { width: 36px; font-size: 18px; line-height: 25px; }

.subnav {
  display: flex;
  align-items: center;
  height: 28px;
  padding: 3px 8px 0 21px;
  background: #abc6e8;
  color: #3a68a8;
}
.subnav a { flex: 1 1 0; height: 20px; margin: 0 4px; border-radius: 5px; text-align: center; line-height: 20px; white-space: nowrap; }
.subnav a.active { background: #edf4fb; font-weight: 700; }
.subnav a.more { flex: 0 0 38px; margin-left: 14px; }
.win-icons { display: flex; align-items: center; gap: 4px; margin-left: 100px; color: #3565a8; }

/* Patient */
.workspace {
  flex: 1;
  min-height: 0;
  display: flex;
  flex-direction: column;
  gap: 3px;
  padding: 4px 2px 0 0;
  background: #dfeaf5;
  border-bottom: 1px solid #3e5068;
}
.patient {
  display: flex;
  align-items: center;
  height: 30px;
  border: 1px solid #a9c6dd;
  border-radius: 5px;
  background: #fdfdfd;
  color: #5b7186;
}
.folder { display: flex; align-items: center; justify-content: center; width: 30px; height: 100%; border-right: 1px solid #b7d0e4; background: #f0f6fb; color: #6c94bb; }
.avatar { margin: 0 6px 0 7px; }
.who { font-size: 11px; line-height: 13px; }
.who b { color: #2f5f9f; }
.who .case { font-size: 9px; line-height: 11px; }
.who .case b { color: #34557c; }
.sex { font-size: 15px; line-height: 12px; color: #6e8db0; }
.flags { display: flex; align-items: center; margin-left: auto; padding-right: 8px; }
.epa { width: 20px; height: 14px; margin: 0 3px 0 4px; background: #4a7dba; color: #fff; font-size: 10px; font-weight: 700; line-height: 14px; text-align: center; }
.allergy { width: 16px; height: 16px; border-radius: 50%; background: #cb5f5f; color: #fff; font-weight: 700; line-height: 16px; text-align: center; }
.alert { width: 22px; color: #d8524f; font-size: 17px; font-weight: 900; text-align: center; }
.lang-flag { width: 14px; height: 14px; margin: 0 5px 0 3px; background: #dedede; }
.lang { width: 52px; }
.info { width: 16px; color: #3f74b4; font: 700 17px "Liberation Serif", serif; }
.flags svg:last-child { margin-left: 4px; }

.columns { flex: 1; min-height: 0; display: flex; }
.chart { flex: 1; min-width: 0; display: flex; flex-direction: column; }

.chart-tabs { display: flex; align-items: flex-end; height: 20px; color: #3f6693; }
.chart-tabs a {
  height: 19px;
  margin-right: 4px;
  padding: 0 6px;
  border: 1px solid #a9c6dd;
  border-bottom: 0;
  border-radius: 3px 3px 0 0;
  background: #f4f8fc;
  line-height: 19px;
}
.chart-tabs a.active { height: 20px; padding: 0 5px; background: #fdfdfd; color: #1f56a0; font-weight: 700; }
.chart-tabs button { display: flex; align-items: center; gap: 4px; height: 19px; color: #5481b3; }
.chart-tabs .save { margin-right: 8px; padding: 0 4px 0 3px; border-radius: 3px; background: #2563b0; color: #fff; }
.chart-tabs .tool { margin-right: 14px; }

.sheet { flex: 1; min-height: 0; display: flex; flex-direction: column; border: solid #a9c6dd; border-width: 1px 1px 0; background: #fdfdfd; }
.filters { display: flex; align-items: center; height: 50px; padding-left: 27px; color: #8a97a3; }
.years { font-size: 8px; fill: #666; }
.fulltext { width: 139px; height: 18px; margin-left: 24px; padding-left: 4px; border: 1px solid #c2c7cb; }
.fulltext::placeholder { color: #bbb; }
.prev { margin-left: 11px; }
.filter { width: 139px; height: 18px; padding-left: 4px; border: 1px solid #c2c7cb; color: #aaa; }
.switches { display: flex; align-items: center; margin-left: auto; padding-right: 3px; color: #333; }
.switches label { display: flex; align-items: center; gap: 5px; margin-right: 4px; }
.switches .storno { gap: 8px; margin: 0 0 0 32px; }
.show-all { width: 95px; height: 22px; margin-right: 6px; border: 1px solid #b9b9b9; border-radius: 3px; background: #fff; color: #8c1f24; font-size: 13px; }

/* List */
.list { flex: 1; min-height: 0; display: flex; overflow: hidden; }
table { flex: 1; width: 100%; height: 100%; table-layout: fixed; border-collapse: separate; border-spacing: 0; }
.c-q { width: 11px; }
.c-chev { width: 18px; }
.c-date { width: 96px; }
.c-type { width: 76px; }
.c-nr { width: 154px; }
.c-status { width: 167px; }
.c-files { width: 48px; }
.c-abr { width: 115px; }

th { height: 22px; padding-left: 4px; color: #5a82ab; font-weight: 400; text-align: left; }
th.l { border-bottom: 1px solid #d5dbe0; }
th.d { padding-left: 5px; }
th.t, td:nth-child(4) { padding-left: 6px; }
th.doc { padding-left: 6px; }

td { padding: 0 0 0 4px; border-bottom: 1px solid #dadee1; line-height: 15px; white-space: nowrap; vertical-align: middle; color: #222; }
td:nth-child(1), td:nth-child(2) { padding: 0; border-bottom-color: transparent; }
td:nth-child(2) { padding-right: 2px; text-align: center; }
td:nth-child(3) { padding-left: 18px; }
td svg { display: inline-block; width: 10px; height: 10px; vertical-align: middle; }
td a { margin-right: 2px; color: #527fa8; text-decoration: underline; }
td:nth-child(5) { color: #667f95; }
td b { color: #2a5a9c; }
td i { color: #a9b0b5; }
td .dark { color: #333; }
td .blue { color: #5f8fc0; }
.last td, .last td:nth-child(1), .last td:nth-child(2) { border-bottom-color: #a8c2d4; }
.f svg { width: 14px; height: 15px; margin: 0 2px 0 0; color: #cf5a55; vertical-align: top; }
td .pv { width: 14px; height: 15px; margin-left: 3px; color: #e0a070; vertical-align: top; }
.q span { position: absolute; margin-top: -9px; color: #a9c6e0; font-size: 9px; font-weight: 700; line-height: 9px; }

.pdf td { background: #f1f2f3; }
.pdf td:nth-child(4) { background: #e4e5e6; }
.ab td { background: #f8f7f4; }
.ab td:nth-child(4) { background: #f6eee2; }
.op td { background: #f6ecdf; }
.op td:nth-child(4) { background: #fbdcba; }
.aap td { background: #f0f6f9; }
.aap td:nth-child(4) { background: #e2eff7; }
.score td { background: #f9e6df; }
.score td:nth-child(4) { background: #f8dcc0; }
tr td:nth-child(1) { background: #fdfdfd; }
.dim td, .dim td .dark { color: #999; }
.dim td a, .dim td:nth-child(5) { color: #93afc6; }
.dim td b { color: #6f9ccb; }
.dim td i { color: #c6c9cc; }
.dim .f svg, .dim .pv { opacity: .6; }

.bar td { height: 5px; border: 0; background: #a9c5e8; }
.bar td:nth-child(1) { background: #a9c5e8; }
.new td, .new td:nth-child(1) { height: 20px; border-bottom: 2px solid #a9c5e8; background: #c0e5fa; }
.new td:nth-child(4) { padding: 0; }
.type { display: block; width: 88px; height: 18px; background-color: #fff; background-position: right 4px center; }
.cal { text-align: right; }
td.cal svg { width: 12px; height: 12px; margin: -2px 4px 0 5px; color: #a9acae; }
.cal span { color: #b3c6d8; }
.abr { display: block; width: 100%; height: 15px; padding: 0; }

.edit td { height: 20px; border-bottom: 1px solid transparent; }
.edit td:nth-child(5) { color: #222; }
.edit.pin td { height: 16px; line-height: 14px; }
.edit td.free { padding-left: 6px; }
.free em { color: #c4161c; font-style: normal; }
td.mark { color: #8fb3dc; font-size: 16px; font-weight: 900; }
.remind svg { width: 15px; height: 16px; margin-left: -6px; color: #8d8d8d; }
.diag td { background: #fadcbd; }
.diag td:nth-child(4) { background: #f3c283; }
.anam td { background: #dde8f4; }
.anam td:nth-child(4) { background: #c4d6ee; }
.perf td { background: #d3e8f3; }
.perf td:nth-child(4) { background: #b1d1e5; }
.note td { background: #e8e8e7; }
.note td:nth-child(4) { background: #d3d3d3; }
.edit td:nth-child(1) { background: #fdfdfd; }
.diag td, .diag td:nth-child(5) { color: #5a2326; }
.perf td:nth-child(4) { color: #2f6bb0; }

.entry { display: flex; align-items: center; height: 18px; padding-right: 3px; }
.entry svg { color: #a3a9ae; }
.code { width: 75px; }
.desc { flex: 1; min-width: 0; margin-left: 8px; }
.mini { width: 39px; height: 16px; background-position: right 4px center; }
.entry label { display: flex; align-items: center; gap: 5px; margin-right: 6px; }
.entry .bub { width: 16px; height: 14px; color: #7397c2; }
.anz { margin-right: 4px; color: #8fa5b6; }
.cut td { height: 4px; border: 0; background: #edb6a8; }
.cut td:nth-child(4) { background: #cf6f6d; }

/* Scrollbars */
.scroll { display: flex; flex-direction: column; align-items: center; padding: 0 0 4px; }
.scroll .up { border: 4px solid transparent; border-top: 0; border-bottom: 6px solid #7e7e7e; }
.scroll .down { margin-top: auto; border: 4px solid transparent; border-bottom: 0; border-top: 6px solid #7e7e7e; }
.scroll .thumb { width: 8px; margin-top: 6px; border-radius: 4px; background: #8d8d8d; }
.list-scroll { width: 13px; padding-top: 25px; }
.list-scroll .thumb { height: 104px; }
.panel-scroll { width: 18px; padding-top: 5px; }
.panel-scroll .thumb { height: 262px; }

/* Side panel */
.panel { display: flex; flex-direction: column; width: 213px; margin-left: 4px; border: 1px solid #a9c6dd; border-bottom: 0; border-radius: 5px 5px 0 0; background: #fdfdfd; }
.panel h2 { display: flex; justify-content: space-between; align-items: center; height: 20px; padding: 0 6px 2px 4px; border-radius: 5px 5px 0 0; background: #cbdef3; color: #2a5a9c; font-size: 12px; font-weight: 700; }
.panel h2 button { display: flex; }
.panel-body { flex: 1; min-height: 0; display: flex; overflow: hidden; }
.groups { flex: 1; display: flex; flex-direction: column; margin: 4px 0 -2px 6px; color: #527ba6; }
.groups h3 { display: flex; align-items: center; gap: 9px; flex: none; height: 19px; padding-left: 2px; border-top: 1px solid #b5c6d2; color: #66727d; font-size: 11px; font-weight: 500; }
.groups h3 svg { width: 11px; height: 11px; color: #3f6fa8; }
.cards { display: flex; flex-direction: column; gap: 9px; padding: 9px 0 10px; }
.cards a { display: flex; align-items: center; height: 37px; border: 1px solid #4d76a6; }
.cards span { width: 35px; height: 100%; margin-right: 10px; border-right: 1px solid #4d76a6; background: #a9c5e8; line-height: 35px; text-align: center; }
.groups ul { flex: 1; display: flex; flex-direction: column; padding-bottom: 9px; list-style: none; white-space: nowrap; }
.groups li { flex: 1; display: flex; align-items: center; padding-left: 2px; }

.rail { display: flex; flex-direction: column; gap: 5px; width: 18px; padding-top: 19px; }
.rail a { width: 17px; height: 106px; padding: 6px 0; border: 1px solid #a9c6dd; border-left: 0; border-radius: 0 4px 4px 0; background: #fdfdfd; color: #5a82ab; writing-mode: vertical-rl; line-height: 17px; }
.rail a.active { width: 15px; color: #2a5a9c; font-weight: 500; }

.pointer { position: absolute; top: 82px; left: 924px; }
```
